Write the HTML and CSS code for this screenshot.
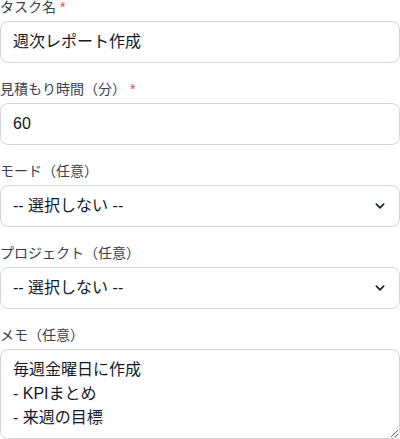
FILE: index.html
```html
<!DOCTYPE html>
<html lang="ja">
<head>
    <meta charset="UTF-8">
    <title>タスク</title>
    <link rel="stylesheet" href="styles.css">
</head>
<body>
<form class="taskForm" action="" method="get">
    <div class="field">
        <label class="fieldLabel" for="title">タスク名 <span class="req">*</span></label>
        <input class="control" type="text" id="title" value="週次レポート作成">
    </div>
    <div class="field">
        <label class="fieldLabel" for="minutes">見積もり時間（分） <span class="req">*</span></label>
        <input class="control" type="text" id="minutes" value="60">
    </div>
    <div class="field">
        <label class="fieldLabel" for="mode">モード（任意）</label>
        <div class="selectWrap">
            <select class="control selectBox" id="mode">
                <option value="">-- 選択しない --</option>
            </select>
            <svg class="chevron" viewBox="0 0 20 20" width="18" height="18"><path d="M6 8l4 4 4-4" fill="none" stroke="#1f2937" stroke-width="2" stroke-linecap="round" stroke-linejoin="round"/></svg>
        </div>
    </div>
    <div class="field">
        <label class="fieldLabel" for="project">プロジェクト（任意）</label>
        <div class="selectWrap">
            <select class="control selectBox" id="project">
                <option value="">-- 選択しない --</option>
            </select>
            <svg class="chevron" viewBox="0 0 20 20" width="18" height="18"><path d="M6 8l4 4 4-4" fill="none" stroke="#1f2937" stroke-width="2" stroke-linecap="round" stroke-linejoin="round"/></svg>
        </div>
    </div>
    <div class="field">
        <label class="fieldLabel" for="memo">メモ（任意）</label>
        <textarea class="control memo" id="memo" rows="3">毎週金曜日に作成
- KPIまとめ
- 来週の目標</textarea>
    </div>
</form>
</body>
</html>
```

FILE: styles.css
```css
html, body {
    margin: 0;
    padding: 0;
}

body {
    width: 400px;
    font-family: "Liberation Sans", "Noto Sans CJK JP", sans-serif;
    color: #111827;
    background: #fff;
    overflow: hidden;
}

.taskForm {
    display: flex;
    flex-direction: column;
    gap: 16px;
    margin-top: -3px;
}

.fieldLabel {
    display: block;
    font-size: 14px;
    line-height: 20px;
    color: #374151;
    margin-bottom: 4px;
}

.req {
    color: #ef4444;
}

.control {
    display: block;
    box-sizing: border-box;
    width: 100%;
    margin: 0;
    padding: 8px 12px;
    font-family: inherit;
    font-size: 16px;
    line-height: 24px;
    color: #111827;
    background: #fff;
    border: 1px solid #d1d5db;
    border-radius: 8px;
    outline: none;
}

.selectWrap {
    position: relative;
}

.selectBox {
    -webkit-appearance: none;
    appearance: none;
    height: 42px;
    padding-right: 40px;
}

.chevron {
    position: absolute;
    right: 11px;
    top: 12px;
    pointer-events: none;
}

.memo {
    resize: vertical;
}
```
